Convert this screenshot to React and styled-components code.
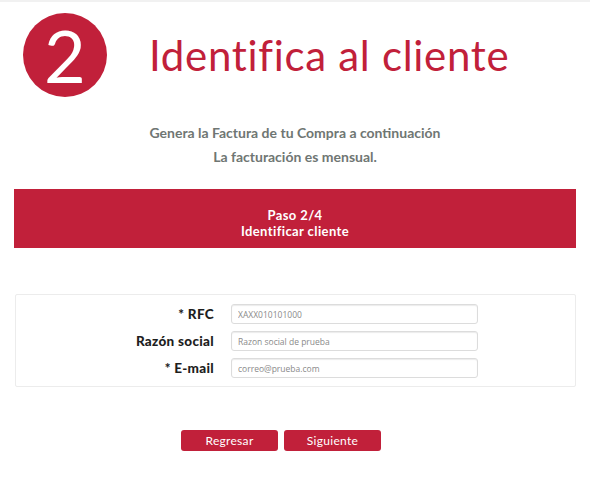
import React from 'react';
import styled, { createGlobalStyle } from 'styled-components';

const RED = '#c1203a';

const GlobalStyle = createGlobalStyle`
  body {
    margin: 0;
    background: #fff;
    font-family: Lato, "Open Sans", sans-serif;
  }
`;

const Page = styled.div`
  width: 590px;
  height: 490px;
  border-top: 2px solid #f1f1f1;
  box-sizing: border-box;
  display: flex;
  flex-direction: column;
`;

const Header = styled.div`
  display: flex;
  align-items: center;
  padding: 11px 0 0 23px;
  gap: 42px;
`;

const StepCircle = styled.div`
  width: 84px;
  height: 84px;
  border-radius: 50%;
  background: ${RED};
  color: #fff;
  display: flex;
  align-items: center;
  justify-content: center;
  font-family: Lato, sans-serif;
  font-weight: 400;
  font-size: 72px;
  line-height: 1;
`;

const Title = styled.h1`
  margin: 0;
  color: ${RED};
  font-family: Lato, sans-serif;
  font-weight: 400;
  font-size: 42px;
  letter-spacing: 0.7px;
`;

const Intro = styled.div`
  margin-top: 24px;
  text-align: center;
  color: #6f7673;
  font-weight: 700;
  font-size: 14px;
  line-height: 24px;
`;

const Banner = styled.div`
  margin: 20px 14px 0;
  height: 59px;
  padding-top: 8px;
  box-sizing: border-box;
  background: ${RED};
  color: #fff;
  display: flex;
  flex-direction: column;
  align-items: center;
  justify-content: center;
  font-weight: 700;
  font-size: 13px;
  letter-spacing: 0.4px;
  line-height: 16px;
`;

const FormBox = styled.div`
  margin: 46px 14px 0 15px;
  padding: 9px 0 8px;
  border: 1px solid #ececec;
  border-radius: 2px;
  display: flex;
  flex-direction: column;
  gap: 7px;
`;

const Row = styled.div`
  display: grid;
  grid-template-columns: 198px 247px;
  column-gap: 17px;
  align-items: center;
`;

const Label = styled.label`
  text-align: right;
  font-weight: 900;
  font-size: 13.5px;
  letter-spacing: 0.3px;
  color: #1e1e1e;
`;

const Field = styled.input`
  height: 20px;
  box-sizing: border-box;
  border: 1px solid #dcdcdc;
  border-radius: 3px;
  box-shadow: inset 0 1px 1px rgba(0, 0, 0, 0.08);
  padding: 0 6px;
  font-family: "Open Sans", sans-serif;
  font-size: 8.5px;
  color: #8a8a8a;
  outline: none;
`;

const Actions = styled.div`
  margin-top: 43px;
  display: flex;
  justify-content: center;
  gap: 6px;
  padding-right: 28px;
`;

const Button = styled.button`
  width: 97px;
  height: 21px;
  border: none;
  border-radius: 3px;
  background: ${RED};
  color: #fff;
  font-family: Lato, sans-serif;
  font-size: 12px;
  letter-spacing: 0.3px;
  cursor: pointer;
`;

const fields = [
  { label: '* RFC', value: 'XAXX010101000' },
  { label: 'Razón social', value: 'Razon social de prueba' },
  { label: '* E-mail', value: 'correo@prueba.com' },
];

export default function App() {
  return (
    <Page>
      <GlobalStyle />
      <Header>
        <StepCircle>2</StepCircle>
        <Title>Identifica al cliente</Title>
      </Header>
      <Intro>
        <div>Genera la Factura de tu Compra a continuación</div>
        <div>La facturación es mensual.</div>
      </Intro>
      <Banner>
        <span>Paso 2/4</span>
        <span>Identificar cliente</span>
      </Banner>
      <FormBox>
        {fields.map(f => (
          <Row key={f.label}>
            <Label>{f.label}</Label>
            <Field defaultValue={f.value} />
          </Row>
        ))}
      </FormBox>
      <Actions>
        <Button>Regresar</Button>
        <Button>Siguiente</Button>
      </Actions>
    </Page>
  );
}
